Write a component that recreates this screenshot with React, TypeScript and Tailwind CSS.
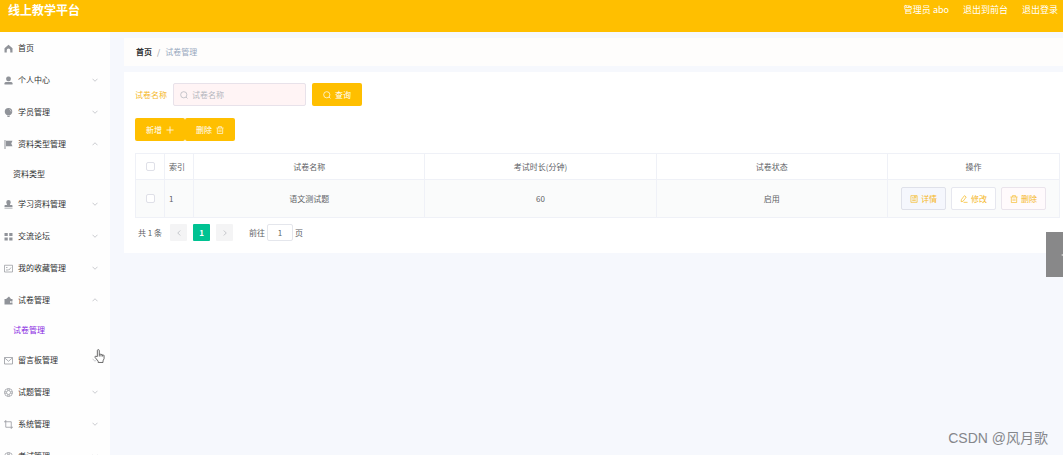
import React, { useState } from 'react';

interface IconProps {
  className?: string;
}

interface MenuItem {
  label: string;
  icon: React.FC<IconProps>;
  children?: string[];
  open?: boolean;
  leaf?: boolean;
}

const HomeIcon: React.FC<IconProps> = ({ className }) => (
  <svg viewBox="0 0 18 18" className={className} fill="currentColor">
    <path d="M9 1.500 1 8.500V17h4.500v-4.500a3.500 3.500 0 0 1 7 0V17H17V8.500z" />
  </svg>
);

const UserIcon: React.FC<IconProps> = ({ className }) => (
  <svg viewBox="0 0 18 18" className={className} fill="currentColor">
    <rect x="4.500" y="1" width="9" height="9.500" rx="3.500" />
    <path d="M1 17v-2.500Q1 12 4.500 12h9q3.500 0 3.500 2.500V17z" />
  </svg>
);

const BulbIcon: React.FC<IconProps> = ({ className }) => (
  <svg viewBox="0 0 18 18" className={className} fill="currentColor">
    <path d="M9 0a7.500 7.500 0 0 1 7.500 7.500c0 3-2 5-4 6.500h-7c-2-1.500-4-3.500-4-6.500A7.500 7.500 0 0 1 9 0zM6 15h6v1.200L10.500 18h-3L6 16.200z" />
    <path d="M11 3q2.500 1 3 4" fill="none" stroke="#fff" strokeWidth="1" />
  </svg>
);

const FlagIcon: React.FC<IconProps> = ({ className }) => (
  <svg viewBox="0 0 18 18" className={className} fill="currentColor">
    <path d="M1 0h2v18H1zM4 1.500h13L14.500 7l2.500 5.500H4z" />
  </svg>
);

const StampIcon: React.FC<IconProps> = ({ className }) => (
  <svg viewBox="0 0 18 18" className={className} fill="currentColor">
    <path d="M9 0a4.500 4.500 0 0 1 4.500 4.500c0 2-1.500 3-1.500 5.500h3.500q1.500 0 1.500 1.500V14H1v-2.500Q1 10 2.500 10H6c0-2.500-1.500-3.500-1.500-5.500A4.500 4.500 0 0 1 9 0zM1 15.500h16V17H1z" />
  </svg>
);

const GridIcon: React.FC<IconProps> = ({ className }) => (
  <svg viewBox="0 0 18 18" className={className} fill="currentColor">
    <path d="M1 2h6.500v6H1zM10.500 2H17v6h-6.500zM1 11h6.500v6H1zM10.500 11H17v6h-6.500z" />
  </svg>
);

const BoardIcon: React.FC<IconProps> = ({ className }) => (
  <svg viewBox="0 0 18 18" className={className} fill="none" stroke="currentColor" strokeWidth="1.400">
    <path d="M1 2.500h16v13.500H1zM4 7h3M4 12h5M9 10l1.500 1.500L14 7" />
  </svg>
);

const WalletIcon: React.FC<IconProps> = ({ className }) => (
  <svg viewBox="0 0 18 18" className={className} fill="currentColor">
    <path d="M1 6h3l6-5 4 5h3v4h-5v4h5v3H1zM13 11h4v2h-4z" />
  </svg>
);

const MailIcon: React.FC<IconProps> = ({ className }) => (
  <svg viewBox="0 0 18 18" className={className} fill="none" stroke="currentColor" strokeWidth="1.500">
    <path d="M1 3h16v13H1zM1.500 4 9 10.500 16.500 4" />
  </svg>
);

const HelpIcon: React.FC<IconProps> = ({ className }) => (
  <svg viewBox="0 0 18 18" className={className} fill="none" stroke="currentColor" strokeWidth="1.300">
    <circle cx="9" cy="9" r="8" />
    <circle cx="9" cy="9" r="4" />
    <path d="M7.500 1v4M10.500 1v4M7.500 13v4M10.500 13v4M1 7.500h4M1 10.500h4M13 7.500h4M13 10.500h4" />
  </svg>
);

const CropIcon: React.FC<IconProps> = ({ className }) => (
  <svg viewBox="0 0 18 18" className={className} fill="none" stroke="currentColor" strokeWidth="1.500">
    <path d="M3.500 0v14.500H18M0 3.500h14.500V18" />
  </svg>
);

const SearchIcon: React.FC<IconProps> = ({ className }) => (
  <svg viewBox="0 0 18 18" className={className} fill="none" stroke="currentColor" strokeWidth="1.600">
    <circle cx="8.500" cy="8.500" r="7" />
    <path d="m13.500 13.500 3.500 3.500" />
  </svg>
);

const PlusIcon: React.FC<IconProps> = ({ className }) => (
  <svg viewBox="0 0 18 18" className={className} fill="none" stroke="currentColor" strokeWidth="1.800">
    <path d="M9 1v16M1 9h16" />
  </svg>
);

const TrashIcon: React.FC<IconProps> = ({ className }) => (
  <svg viewBox="0 0 18 18" className={className} fill="none" stroke="currentColor" strokeWidth="1.500">
    <path d="M1 4.500h16M5.500 4V1.500h7V4M3 5v12h12V5M7 8v5.500M11 8v5.500" />
  </svg>
);

const DocIcon: React.FC<IconProps> = ({ className }) => (
  <svg viewBox="0 0 18 18" className={className} fill="none" stroke="currentColor" strokeWidth="1.500">
    <path d="M2 1.500h14v15H2zM5 5.500h3M5 9h8M5 12.500h8M10 2v4l1.500-1L13 6V2" />
  </svg>
);

const EditIcon: React.FC<IconProps> = ({ className }) => (
  <svg viewBox="0 0 18 18" className={className} fill="none" stroke="currentColor" strokeWidth="1.600">
    <path d="m10 1.500 4 3L7 14l-4.500 1L3 10.500zM8 16.500h9" />
  </svg>
);

const Chevron: React.FC<IconProps> = ({ className }) => (
  <svg viewBox="0 0 12 12" className={className} fill="none" stroke="currentColor" strokeWidth="1.400">
    <path d="m1 3.500 5 5 5-5" />
  </svg>
);

const menu: MenuItem[] = [
  { label: '首页', icon: HomeIcon, leaf: true },
  { label: '个人中心', icon: UserIcon },
  { label: '学员管理', icon: BulbIcon },
  { label: '资料类型管理', icon: FlagIcon, open: true, children: ['资料类型'] },
  { label: '学习资料管理', icon: StampIcon },
  { label: '交流论坛', icon: GridIcon },
  { label: '我的收藏管理', icon: BoardIcon },
  { label: '试卷管理', icon: WalletIcon, open: true, children: ['试卷管理'] },
  { label: '留言板管理', icon: MailIcon },
  { label: '试题管理', icon: HelpIcon },
  { label: '系统管理', icon: CropIcon },
  { label: '考试管理', icon: HelpIcon },
];

const papers = [{ id: 1, name: '语文测试题', minutes: 60, status: '启用' }];

const Sidebar: React.FC = () => (
  <nav className="w-[110px] shrink-0 overflow-hidden bg-[#fefefe]">
    {menu.map((item, index) => (
      <div key={index}>
        <button className="flex h-8 w-full items-center gap-[5px] pl-1 pr-3 text-[#303133]">
          <item.icon className="h-[9px] w-[9px] shrink-0 text-[#909399]" />
          <span className="flex-1 text-left">{item.label}</span>
          {!item.leaf && (
            <Chevron className={item.open ? 'h-[6px] w-[6px] rotate-180 text-[#b4b6bb]' : 'h-[6px] w-[6px] text-[#b4b6bb]'} />
          )}
        </button>
        {item.children?.map((child) => (
          <a
            key={child}
            href="#"
            className={
              item.label === child
                ? 'flex h-[28px] items-center pl-[13px] text-[#8a2be2]'
                : 'flex h-[28px] items-center pl-[13px] text-[#303133]'
            }
          >
            {child}
          </a>
        ))}
      </div>
    ))}
  </nav>
);

const PaperTable: React.FC = () => (
  <table className="mt-3 w-full table-fixed border-collapse text-center text-[#606266]">
    <colgroup>
      <col className="w-[29px]" />
      <col className="w-[29px]" />
      <col />
      <col />
      <col />
      <col className="w-[172px]" />
    </colgroup>
    <thead>
      <tr className="h-[26px]">
        <th className="border border-[#eff1f7] p-0">
          <input type="checkbox" aria-label="全选" className="mx-auto block h-[9px] w-[9px] appearance-none rounded-[2px] border border-[#dfe0e8] bg-white" />
        </th>
        <th className="border border-[#eff1f7] p-0 pl-1 text-left font-normal">索引</th>
        <th className="border border-[#eff1f7] p-0 font-normal">试卷名称</th>
        <th className="border border-[#eff1f7] p-0 font-normal">考试时长(分钟)</th>
        <th className="border border-[#eff1f7] p-0 font-normal">试卷状态</th>
        <th className="border border-[#eff1f7] p-0 font-normal">操作</th>
      </tr>
    </thead>
    <tbody>
      {papers.map((paper) => (
        <tr key={paper.id} className="h-[38px] bg-[#fafbfb]">
          <td className="border border-[#eff1f7] p-0">
            <input type="checkbox" aria-label={paper.name} className="mx-auto block h-[9px] w-[9px] appearance-none rounded-[2px] border border-[#dfe0e8] bg-white" />
          </td>
          <td className="border border-[#eff1f7] p-0 pl-1 text-left">{paper.id}</td>
          <td className="border border-[#eff1f7] p-0">{paper.name}</td>
          <td className="border border-[#eff1f7] p-0">{paper.minutes}</td>
          <td className="border border-[#eff1f7] p-0">{paper.status}</td>
          <td className="border border-[#eff1f7] p-0">
            <div className="flex justify-center gap-[5px] text-[#f5b81f]">
              <button className="flex h-[23px] w-[45px] items-center justify-center gap-[3px] rounded-[2px] border border-[#dfe1ea] bg-[#f5f7fd]">
                <DocIcon className="h-2 w-2" />
                详情
              </button>
              <button className="flex h-[23px] w-[45px] items-center justify-center gap-[3px] rounded-[2px] border border-[#e6e7ef] bg-white">
                <EditIcon className="h-2 w-2" />
                修改
              </button>
              <button className="flex h-[23px] w-[45px] items-center justify-center gap-[3px] rounded-[2px] border border-[#eae4ec] bg-[#fffafc]">
                <TrashIcon className="h-2 w-2" />
                删除
              </button>
            </div>
          </td>
        </tr>
      ))}
    </tbody>
  </table>
);

const Pagination: React.FC = () => {
  const [page, setPage] = useState('1');

  return (
    <div className="mt-[6px] flex h-[17px] items-center pl-[3px] text-[#606266]">
      <span>共 1 条</span>
      <button aria-label="上一页" className="ml-2 flex h-[17px] w-[17px] items-center justify-center rounded-[1px] bg-[#f4f4f5] text-[#b0b3ba]">
        <Chevron className="h-[6px] w-[6px] rotate-90" />
      </button>
      <button className="ml-[6px] h-[17px] w-[17px] rounded-[1px] bg-[#00c292] font-bold text-white">1</button>
      <button aria-label="下一页" className="ml-[6px] flex h-[17px] w-[17px] items-center justify-center rounded-[1px] bg-[#f4f4f5] text-[#b0b3ba]">
        <Chevron className="h-[6px] w-[6px] -rotate-90" />
      </button>
      <label className="ml-4 flex items-center gap-[2px]">
        前往
        <input
          value={page}
          onChange={(e) => setPage(e.target.value)}
          className="h-[17px] w-[26px] rounded-[2px] border border-[#e4e6ec] bg-white text-center"
        />
        <span>页</span>
      </label>
    </div>
  );
};

export default function App() {
  return (
    <div className="relative flex h-screen flex-col overflow-hidden bg-[#f6f8fd] font-['Noto_Sans_CJK_SC',sans-serif] text-[8px] leading-3">
      <header className="flex h-8 shrink-0 items-start justify-between bg-[#ffbf00] pl-2 pr-[5px] text-white">
        <h1 className="text-[12px] leading-5 font-bold">线上教学平台</h1>
        <div className="flex gap-[14px] text-[9px] leading-5">
          <span>管理员 abo</span>
          <a href="#">退出到前台</a>
          <a href="#">退出登录</a>
        </div>
      </header>

      <div className="flex min-h-0 flex-1">
        <Sidebar />
        <main className="min-w-0 flex-1 pl-[14px] pt-[6px]">
          <div className="flex h-7 items-center gap-[5px] bg-[#fefdfc] pl-3">
            <a href="#" className="font-bold text-[#303133]">首页</a>
            <span className="text-[#909399]">/</span>
            <span className="text-[#97a8be]">试卷管理</span>
          </div>

          <section className="mt-[6px] bg-white pb-3 pl-[11px] pr-[3px] pt-[11px]">
            <form className="flex items-center gap-[6px]" onSubmit={(e) => e.preventDefault()}>
              <label htmlFor="paper-name" className="text-[#f5b81f]">试卷名称</label>
              <div className="flex h-[23px] w-[133px] items-center gap-1 rounded-[2px] border border-[#e8e2ea] bg-[#fff4f5] px-[6px]">
                <SearchIcon className="h-2 w-2 shrink-0 text-[#b0b3ba]" />
                <input
                  id="paper-name"
                  placeholder="试卷名称"
                  className="w-full min-w-0 bg-transparent outline-none placeholder:text-[#b4b7be]"
                />
              </div>
              <button className="flex h-[23px] w-[50px] items-center justify-center gap-1 rounded-[2px] bg-[#ffbf00] text-white">
                <SearchIcon className="h-2 w-2" />
                查询
              </button>
            </form>

            <div className="mt-3 flex text-white">
              <button className="flex h-[23px] w-[50px] items-center justify-center gap-1 rounded-[2px] bg-[#ffbf00]">
                新增
                <PlusIcon className="h-2 w-2" />
              </button>
              <button className="flex h-[23px] w-[50px] items-center justify-center gap-1 rounded-[2px] bg-[#ffbf00]">
                删除
                <TrashIcon className="h-2 w-2" />
              </button>
            </div>

            <PaperTable />
            <Pagination />
          </section>
        </main>
      </div>

      <button aria-label="展开" className="absolute right-0 top-[232px] flex h-[45px] w-[17px] items-center justify-end bg-[#888889] text-[#d5d5d5]">
        <svg viewBox="0 0 2 4" className="h-1 w-[2px]" fill="currentColor">
          <path d="M2 1v2L0 2z" />
        </svg>
      </button>

      <svg viewBox="0 0 20 26" className="absolute left-[94px] top-[349px] h-[14px] w-[11px]" fill="#fff" stroke="#555" strokeWidth="1.600" strokeLinejoin="round">
        <path d="M6 14V3a1.800 1.800 0 0 1 3.600 0v7q1.700-1.500 3.200.5 1.700-1.200 3 .6 2.200-.6 2.700 1.400V18l-2 4v3H7.500v-2.500L2 16q-1.500-2.500 1-2.500z" />
        <path d="M9.600 10v4M12.800 10.500V14M15.800 11v3" />
      </svg>

      <span className="absolute bottom-2 right-[15px] font-['Liberation_Sans','Noto_Sans_CJK_SC',sans-serif] text-[14px] leading-[18px] text-[#85878b]">
        CSDN @风月歌
      </span>
    </div>
  );
}
